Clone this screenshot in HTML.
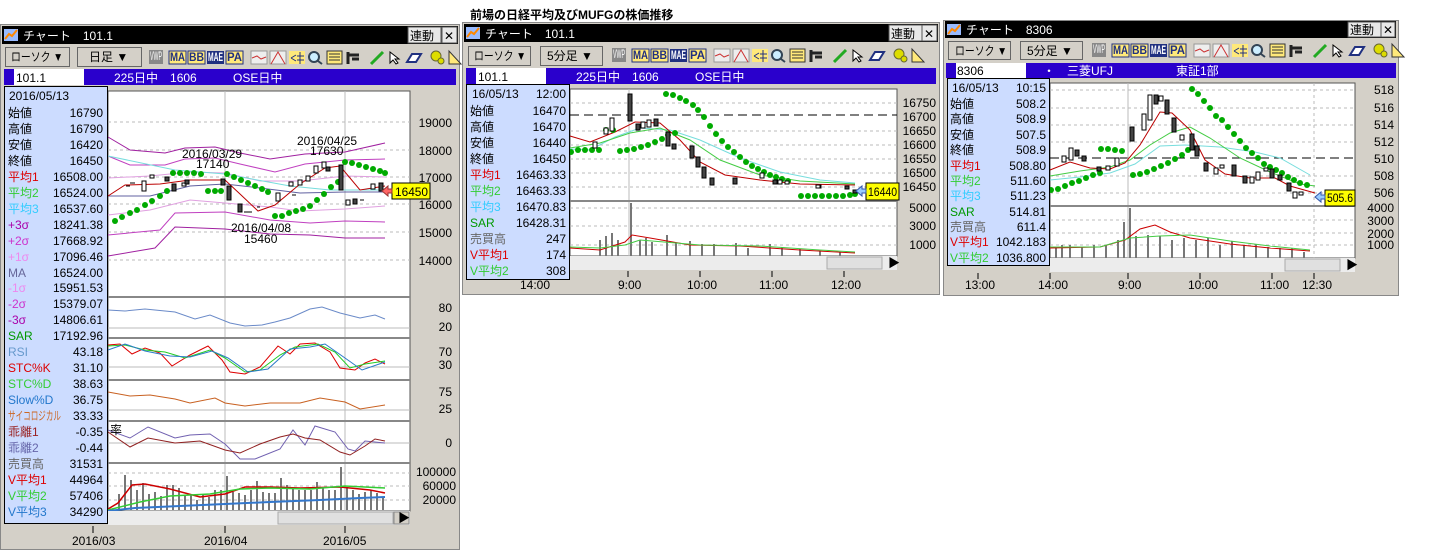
<!DOCTYPE html>
<html><head><meta charset="utf-8"><style>
html,body{margin:0;padding:0;background:#fff;width:1455px;height:556px;overflow:hidden}
svg{display:block}
text{font-family:"Liberation Sans","Noto Sans CJK JP",sans-serif;font-size:12px}
.ax{font-size:11.5px;text-anchor:end;fill:#000}
.v{text-anchor:end}
</style></head><body>
<svg width="1455" height="556" viewBox="0 0 1455 556" xmlns="http://www.w3.org/2000/svg">
<defs>
<g id="tb">
 <rect x="0" y="0" width="14" height="14" fill="#888"/><text x="1" y="10" font-size="6" fill="#fff" textLength="12" lengthAdjust="spacingAndGlyphs">VWP</text>
 <rect x="20" y="1" width="17" height="13" fill="#ffe97a" stroke="#203080"/><text x="21" y="11" font-size="8" font-weight="bold" fill="#203080" textLength="15" lengthAdjust="spacingAndGlyphs">MA</text>
 <rect x="39" y="1" width="17" height="13" fill="#ffe97a" stroke="#203080"/><text x="40" y="11" font-size="8" font-weight="bold" fill="#203080" textLength="15" lengthAdjust="spacingAndGlyphs">BB</text>
 <rect x="58" y="1" width="17" height="13" fill="#203080"/><text x="59" y="11" font-size="7" font-weight="bold" fill="#fff" textLength="15" lengthAdjust="spacingAndGlyphs">MAE</text>
 <rect x="77" y="1" width="17" height="13" fill="#ffe97a" stroke="#203080"/><text x="78" y="11" font-size="8" font-weight="bold" fill="#203080" textLength="15" lengthAdjust="spacingAndGlyphs">PA</text>
 <rect x="102" y="1" width="16" height="13" fill="#eee" stroke="#999"/><path d="M103 8 L108 6 L112 9 L117 7" stroke="#c33" fill="none"/>
 <rect x="121" y="1" width="16" height="13" fill="#eee" stroke="#999"/><path d="M122 14 L129 2 L136 14" stroke="#c33" fill="none"/>
 <rect x="140" y="1" width="16" height="13" fill="#ffe97a"/><path d="M142 8 L147 5 M142 8 L147 11 M151 2 V14 M148 6 H155 M148 10 H155" stroke="#203080" fill="none"/>
 <circle cx="165" cy="7" r="5" fill="#cef" stroke="#345" stroke-width="2"/><path d="M169 11 L173 14" stroke="#345" stroke-width="2"/>
 <rect x="178" y="1" width="15" height="13" fill="#ffe97a" stroke="#333"/><path d="M180 4H191M180 7H191M180 10H191" stroke="#333"/>
 <path d="M199 2V14M199 5H210M203 9H210" stroke="#222" stroke-width="3"/>
 <path d="M222 14 L234 2" stroke="#2a2" stroke-width="3"/>
 <path d="M241 2 L241 13 L244 10 L247 14 L249 13 L246 9 L250 9 Z" fill="#fff" stroke="#000"/>
 <path d="M258 12 L263 4 L272 4 L267 12 Z" fill="#fff" stroke="#203080" stroke-width="2"/>
 <circle cx="287" cy="6" r="5" fill="#dd0" stroke="#663"/><circle cx="292" cy="11" r="3" fill="#dd0" stroke="#663"/>
 <path d="M300 1 L300 14 L312 14 Z" fill="#ffe97a" stroke="#333"/>
</g>
</defs>

<text x="470" y="19" font-size="14" font-weight="bold">前場の日経平均及びMUFGの株価推移</text>

<!-- ================= WINDOW 1 ================= -->
<rect x="0.5" y="24.5" width="459" height="525" fill="#d4d0c8" stroke="#888"/>
<rect x="2" y="26" width="456" height="18" fill="#000"/>
<rect x="4" y="29" width="14" height="12" fill="#9bf"/><path d="M5 39 L9 34 L12 36 L17 30" stroke="#f80" stroke-width="2" fill="none"/>
<text x="23" y="40" fill="#fff" font-size="13">チャート　101.1</text>
<rect x="408" y="27" width="33" height="16" fill="#e8e8e8" stroke="#555"/><text x="410" y="40" font-size="13">連動</text>
<rect x="442" y="27" width="15" height="16" fill="#e8e8e8" stroke="#555"/><text x="444" y="40" font-size="13">✕</text>
<rect x="5.5" y="47.5" width="64" height="19" fill="#d4d0c8" stroke="#666"/><text x="11" y="61" font-size="11" textLength="52" lengthAdjust="spacingAndGlyphs">ローソク ▼</text>
<rect x="77.5" y="47.5" width="64" height="19" fill="#d4d0c8" stroke="#666"/><text x="89" y="61" font-size="11">日足 ▼</text>
<use href="#tb" x="149" y="50"/>
<rect x="4" y="69" width="452" height="16" fill="#2a00cc"/>
<rect x="14" y="69" width="70" height="16" fill="#fff"/><text x="16" y="82">101.1</text>
<text x="114" y="82" fill="#fff">225日中　1606</text><text x="233" y="82" fill="#fff">OSE日中</text>
<rect x="108" y="91" width="302" height="420" fill="#fff" stroke="#555"/>
<g stroke="#bbb" stroke-dasharray="3,3"><line x1="108" y1="122" x2="410" y2="122"/><line x1="108" y1="150" x2="410" y2="150"/><line x1="108" y1="177" x2="410" y2="177"/><line x1="108" y1="204" x2="410" y2="204"/><line x1="108" y1="232" x2="410" y2="232"/><line x1="108" y1="260" x2="410" y2="260"/>
<line x1="108" y1="486" x2="410" y2="486"/><line x1="108" y1="473" x2="410" y2="473"/><line x1="108" y1="500" x2="410" y2="500"/></g>
<g stroke="#bbb"><line x1="225" y1="91" x2="225" y2="511"/><line x1="345" y1="91" x2="345" y2="511"/><line x1="108" y1="328" x2="410" y2="328"/><line x1="108" y1="367" x2="410" y2="367"/><line x1="108" y1="410" x2="410" y2="410"/><line x1="108" y1="443" x2="410" y2="443"/></g>
<g stroke="#888" stroke-width="2"><line x1="108" y1="297" x2="410" y2="297"/><line x1="108" y1="338" x2="410" y2="338"/><line x1="108" y1="380" x2="410" y2="380"/><line x1="108" y1="421" x2="410" y2="421"/><line x1="108" y1="463" x2="410" y2="463"/></g>
<g fill="none" stroke-width="1">
<polyline stroke="#a020a0" points="108,137 130,150 165,153 185,148 215,147 240,153 270,159 305,154 345,152 385,143"/>
<polyline stroke="#c040c0" points="108,156 130,165 165,165 185,159 215,158 240,164 275,172 305,164 345,160 385,159"/>
<polyline stroke="#e0a0e0" points="108,178 150,176 190,172 225,173 260,181 300,181 345,176 385,177"/>
<polyline stroke="#6060a0" points="108,196 150,196 190,186 225,184 260,188 300,193 345,192 385,192"/>
<polyline stroke="#e0a0e0" points="108,215 150,210 190,200 225,203 270,207 300,211 345,209 385,206"/>
<polyline stroke="#c040c0" points="108,235 160,230 175,213 225,212 270,220 310,223 345,221 385,222"/>
<polyline stroke="#a020a0" points="108,256 155,248 175,227 225,229 270,234 310,235 345,238 385,238"/>
<polyline stroke="#7dd" points="108,156 175,170 225,174 290,186 330,190 385,190"/>
<polyline stroke="#b00" points="108,196 125,185 160,184 190,180 225,180 240,194 258,211 275,205 300,184 325,168 340,166 360,190 385,186"/>
</g>
<g fill="#0a0"><circle cx="115" cy="221" r="3"/><circle cx="122" cy="217" r="3"/><circle cx="130" cy="213" r="3"/><circle cx="137" cy="210" r="3"/><circle cx="145" cy="205" r="3"/><circle cx="152" cy="201" r="3"/><circle cx="160" cy="196" r="3"/><circle cx="167" cy="191" r="3"/><circle cx="173" cy="173" r="3"/><circle cx="180" cy="173" r="3"/><circle cx="187" cy="173" r="3"/><circle cx="194" cy="173" r="3"/><circle cx="201" cy="174" r="3"/><circle cx="208" cy="191" r="3"/><circle cx="215" cy="191" r="3"/><circle cx="221" cy="191" r="3"/><circle cx="227" cy="174" r="3"/><circle cx="234" cy="177" r="3"/><circle cx="241" cy="180" r="3"/><circle cx="248" cy="183" r="3"/><circle cx="255" cy="186" r="3"/><circle cx="262" cy="189" r="3"/><circle cx="268" cy="192" r="3"/><circle cx="275" cy="216" r="3"/><circle cx="282" cy="216" r="3"/><circle cx="289" cy="213" r="3"/><circle cx="296" cy="211" r="3"/><circle cx="303" cy="209" r="3"/><circle cx="310" cy="206" r="3"/><circle cx="317" cy="200" r="3"/><circle cx="324" cy="194" r="3"/><circle cx="331" cy="187" r="3"/><circle cx="338" cy="182" r="3"/><circle cx="345" cy="162" r="3"/><circle cx="352" cy="163" r="3"/><circle cx="359" cy="165" r="3"/><circle cx="366" cy="167" r="3"/><circle cx="373" cy="169" r="3"/><circle cx="380" cy="171" r="3"/><circle cx="385" cy="173" r="3"/></g>
<g stroke="#000" fill="#fff"><rect x="142" y="181" width="4" height="10"/><rect x="150" y="175" width="4" height="3"/><rect x="182" y="183" width="4" height="3"/><rect x="276" y="193" width="4" height="8"/><rect x="298" y="180" width="4" height="5"/><rect x="314" y="166" width="4" height="7"/><rect x="322" y="162" width="4" height="6"/><rect x="346" y="200" width="4" height="5"/><rect x="371" y="184" width="4" height="5"/><rect x="306" y="176" width="4" height="5"/><rect x="289" y="182" width="4" height="4"/></g>
<g fill="#444" stroke="#000"><rect x="172" y="184" width="4" height="7"/><rect x="221" y="179" width="4" height="6"/><rect x="227" y="186" width="4" height="14"/><rect x="238" y="204" width="4" height="8"/><rect x="339" y="165" width="4" height="25"/><rect x="353" y="199" width="4" height="5"/><rect x="379" y="183" width="4" height="8"/><rect x="326" y="167" width="4" height="4"/><rect x="165" y="177" width="4" height="4"/><rect x="185" y="180" width="4" height="4"/></g>
<g stroke="#000"><line x1="130" y1="183" x2="135" y2="183"/><line x1="126" y1="186" x2="130" y2="186"/><line x1="244" y1="212" x2="252" y2="212"/><line x1="257" y1="207" x2="260" y2="207"/><line x1="292" y1="195" x2="296" y2="195"/><line x1="360" y1="200" x2="364" y2="200"/></g>
<text x="182" y="158" font-size="11">2016/03/29</text><text x="196" y="168" font-size="11">17140</text>
<text x="297" y="145" font-size="11">2016/04/25</text><text x="310" y="155" font-size="11">17630</text>
<text x="231" y="232" font-size="11">2016/04/08</text><text x="244" y="243" font-size="11">15460</text>
<polyline fill="none" stroke="#6a8ac8" points="108,310 125,311 145,309 175,312 195,319 210,315 230,323 245,326 262,325 275,322 290,318 310,309 322,307 340,313 360,318 375,315 385,319"/>
<polyline fill="none" stroke="#d00" points="108,345 120,344 132,354 145,348 160,353 172,366 190,355 208,346 222,360 230,372 245,374 260,367 278,346 290,354 300,344 315,343 330,352 340,368 355,370 365,363 375,359 385,364"/>
<polyline fill="none" stroke="#2c2" points="108,346 125,345 145,350 165,352 185,358 210,350 225,358 245,372 260,370 280,355 295,347 318,344 335,352 350,368 365,364 385,361"/>
<polyline fill="none" stroke="#2a7ac8" points="108,350 125,344 145,351 170,356 190,357 212,351 228,358 248,372 268,369 290,349 310,347 325,344 345,358 362,370 385,362"/>
<polyline fill="none" stroke="#c86020" points="108,392 130,396 150,395 175,399 190,403 215,398 225,403 245,406 270,403 300,403 320,398 345,402 360,409 385,405"/>
<polyline fill="none" stroke="#7060b0" points="108,430 130,438 148,427 175,438 190,435 210,434 225,444 240,459 255,459 280,449 293,430 305,445 315,426 335,432 348,449 355,451 365,441 385,443"/>
<polyline fill="none" stroke="#902020" points="108,432 130,447 148,438 175,443 200,441 225,450 240,453 260,444 280,437 293,434 305,438 320,440 340,452 350,455 365,446 375,439 385,441"/>
<text x="110" y="434" font-size="11">率</text>
<g stroke="#777" stroke-width="2"><line x1="119" y1="510" x2="119" y2="494"/><line x1="125" y1="510" x2="125" y2="475"/><line x1="131" y1="510" x2="131" y2="480"/><line x1="137" y1="510" x2="137" y2="490"/><line x1="143" y1="510" x2="143" y2="483"/><line x1="149" y1="510" x2="149" y2="494"/><line x1="155" y1="510" x2="155" y2="492"/><line x1="161" y1="510" x2="161" y2="496"/><line x1="167" y1="510" x2="167" y2="485"/><line x1="173" y1="510" x2="173" y2="485"/><line x1="179" y1="510" x2="179" y2="488"/><line x1="185" y1="510" x2="185" y2="496"/><line x1="191" y1="510" x2="191" y2="495"/><line x1="197" y1="510" x2="197" y2="500"/><line x1="203" y1="510" x2="203" y2="494"/><line x1="209" y1="510" x2="209" y2="497"/><line x1="215" y1="510" x2="215" y2="490"/><line x1="221" y1="510" x2="221" y2="490"/><line x1="227" y1="510" x2="227" y2="476"/><line x1="233" y1="510" x2="233" y2="492"/><line x1="239" y1="510" x2="239" y2="493"/><line x1="245" y1="510" x2="245" y2="495"/><line x1="251" y1="510" x2="251" y2="490"/><line x1="257" y1="510" x2="257" y2="481"/><line x1="263" y1="510" x2="263" y2="492"/><line x1="269" y1="510" x2="269" y2="493"/><line x1="275" y1="510" x2="275" y2="493"/><line x1="281" y1="510" x2="281" y2="478"/><line x1="287" y1="510" x2="287" y2="485"/><line x1="293" y1="510" x2="293" y2="488"/><line x1="299" y1="510" x2="299" y2="490"/><line x1="305" y1="510" x2="305" y2="490"/><line x1="311" y1="510" x2="311" y2="490"/><line x1="317" y1="510" x2="317" y2="482"/><line x1="323" y1="510" x2="323" y2="488"/><line x1="329" y1="510" x2="329" y2="490"/><line x1="335" y1="510" x2="335" y2="490"/><line x1="341" y1="510" x2="341" y2="467"/><line x1="347" y1="510" x2="347" y2="487"/><line x1="353" y1="510" x2="353" y2="490"/><line x1="359" y1="510" x2="359" y2="494"/><line x1="365" y1="510" x2="365" y2="492"/><line x1="371" y1="510" x2="371" y2="490"/><line x1="377" y1="510" x2="377" y2="493"/><line x1="383" y1="510" x2="383" y2="497"/></g>
<polyline fill="none" stroke="#c00" stroke-width="1.5" points="108,509 118,503 132,485 145,484 170,489 200,497 225,494 245,487 270,487 300,488 340,487 370,490 385,493"/>
<polyline fill="none" stroke="#3c3" stroke-width="1.5" points="108,510 140,502 170,496 210,494 240,489 270,488 310,489 345,486 385,488"/>
<polyline fill="none" stroke="#37c" stroke-width="2" points="108,511 135,508 180,506 225,504 270,502 320,500 360,498 385,497"/>
<rect x="108" y="511" width="302" height="14" fill="#ececec"/><rect x="278" y="512" width="115" height="12" fill="#e0e0e0" stroke="#aaa"/><rect x="394" y="512" width="15" height="12" fill="#d4d0c8" stroke="#888"/><text x="398" y="522" font-size="8">▶</text>
<g class="ax"><text x="452" y="127">19000</text><text x="452" y="155">18000</text><text x="452" y="182">17000</text><text x="452" y="209">16000</text><text x="452" y="237">15000</text><text x="452" y="265">14000</text>
<text x="452" y="312">80</text><text x="452" y="331">20</text><text x="452" y="356">70</text><text x="452" y="369">30</text><text x="452" y="396">75</text><text x="452" y="413">25</text><text x="452" y="447">0</text><text x="456" y="476">100000</text><text x="456" y="490">60000</text><text x="456" y="504">20000</text></g>
<rect x="392" y="183" width="38" height="16" fill="#ff0" stroke="#000"/><text x="395" y="196" textLength="33" lengthAdjust="spacingAndGlyphs">16450</text>
<path d="M382 191 L388 186 V189 H392 V193 H388 V196 Z" fill="#f66" stroke="#933"/>
<g stroke="#000"><line x1="93" y1="526" x2="93" y2="533"/><line x1="225" y1="526" x2="225" y2="533"/><line x1="345" y1="526" x2="345" y2="533"/></g>
<text x="72" y="545" font-size="11.5">2016/03</text><text x="204" y="545" font-size="11.5">2016/04</text><text x="323" y="545" font-size="11.5">2016/05</text>
<rect x="4.5" y="86.5" width="103" height="437" fill="#ccdcff" stroke="#000"/>
<g font-size="12">
<text x="9" y="100">2016/05/13</text>
<text x="8" y="117">始値</text><text class="v" x="103" y="117">16790</text>
<text x="8" y="133">高値</text><text class="v" x="103" y="133">16790</text>
<text x="8" y="149">安値</text><text class="v" x="103" y="149">16420</text>
<text x="8" y="165">終値</text><text class="v" x="103" y="165">16450</text>
<text x="8" y="181" fill="#d00">平均1</text><text class="v" x="103" y="181">16508.00</text>
<text x="8" y="197" fill="#3c3">平均2</text><text class="v" x="103" y="197">16524.00</text>
<text x="8" y="213" fill="#3cf">平均3</text><text class="v" x="103" y="213">16537.60</text>
<text x="8" y="229" fill="#a0a">+3σ</text><text class="v" x="103" y="229">18241.38</text>
<text x="8" y="245" fill="#c3c">+2σ</text><text class="v" x="103" y="245">17668.92</text>
<text x="8" y="261" fill="#e8e">+1σ</text><text class="v" x="103" y="261">17096.46</text>
<text x="8" y="277" fill="#669">MA</text><text class="v" x="103" y="277">16524.00</text>
<text x="8" y="292" fill="#e8e">-1σ</text><text class="v" x="103" y="292">15951.53</text>
<text x="8" y="308" fill="#c3c">-2σ</text><text class="v" x="103" y="308">15379.07</text>
<text x="8" y="324" fill="#a0a">-3σ</text><text class="v" x="103" y="324">14806.61</text>
<text x="8" y="340" fill="#090">SAR</text><text class="v" x="103" y="340">17192.96</text>
<text x="8" y="356" fill="#69c">RSI</text><text class="v" x="103" y="356">43.18</text>
<text x="8" y="372" fill="#d00">STC%K</text><text class="v" x="103" y="372">31.10</text>
<text x="8" y="388" fill="#3c3">STC%D</text><text class="v" x="103" y="388">38.63</text>
<text x="8" y="404" fill="#27c">Slow%D</text><text class="v" x="103" y="404">36.75</text>
<text x="8" y="420" fill="#c62" textLength="53" lengthAdjust="spacingAndGlyphs">サイコロジカル</text><text class="v" x="103" y="420">33.33</text>
<text x="8" y="436" fill="#922">乖離1</text><text class="v" x="103" y="436">-0.35</text>
<text x="8" y="452" fill="#66a">乖離2</text><text class="v" x="103" y="452">-0.44</text>
<text x="8" y="468" fill="#666">売買高</text><text class="v" x="103" y="468">31531</text>
<text x="8" y="484" fill="#d00">V平均1</text><text class="v" x="103" y="484">44964</text>
<text x="8" y="500" fill="#3c3">V平均2</text><text class="v" x="103" y="500">57406</text>
<text x="8" y="516" fill="#27c">V平均3</text><text class="v" x="103" y="516">34290</text>
</g>

<!-- ================= WINDOW 2 ================= -->
<rect x="462.5" y="22.5" width="477" height="272" fill="#d4d0c8" stroke="#888"/>
<rect x="464" y="24" width="474" height="18" fill="#000"/>
<rect x="466" y="27" width="14" height="12" fill="#9bf"/><path d="M467 37 L471 32 L474 34 L479 28" stroke="#f80" stroke-width="2" fill="none"/>
<text x="485" y="38" fill="#fff" font-size="13">チャート　101.1</text>
<rect x="889" y="25" width="33" height="16" fill="#e8e8e8" stroke="#555"/><text x="891" y="38" font-size="13">連動</text>
<rect x="922" y="25" width="15" height="16" fill="#e8e8e8" stroke="#555"/><text x="924" y="38" font-size="13">✕</text>
<rect x="468.5" y="46.5" width="62" height="19" fill="#d4d0c8" stroke="#666"/><text x="474" y="60" font-size="11" textLength="52" lengthAdjust="spacingAndGlyphs">ローソク ▼</text>
<rect x="540.5" y="46.5" width="62" height="19" fill="#d4d0c8" stroke="#666"/><text x="547" y="60" font-size="11">5分足 ▼</text>
<use href="#tb" x="612" y="48"/>
<rect x="466" y="68" width="470" height="16" fill="#2a00cc"/>
<rect x="476" y="68" width="70" height="16" fill="#fff"/><text x="478" y="81">101.1</text>
<text x="576" y="81" fill="#fff">225日中　1606</text><text x="695" y="81" fill="#fff">OSE日中</text>
<rect x="570" y="89" width="327" height="167" fill="#fff" stroke="#555"/>
<g stroke="#bbb" stroke-dasharray="3,3"><line x1="570" y1="103" x2="897" y2="103"/><line x1="570" y1="131" x2="897" y2="131"/><line x1="570" y1="145" x2="897" y2="145"/><line x1="570" y1="159" x2="897" y2="159"/><line x1="570" y1="173" x2="897" y2="173"/><line x1="570" y1="187" x2="897" y2="187"/><line x1="570" y1="208" x2="897" y2="208"/><line x1="570" y1="226" x2="897" y2="226"/><line x1="570" y1="245" x2="897" y2="245"/></g>
<line x1="570" y1="115" x2="897" y2="115" stroke="#000" stroke-dasharray="9,5"/>
<line x1="629" y1="89" x2="629" y2="256" stroke="#bbb"/>
<line x1="570" y1="201" x2="897" y2="201" stroke="#888" stroke-width="2"/>
<polyline fill="none" stroke="#7dd" points="570,149 590,150 615,137 640,128 670,130 700,140 740,158 780,172 820,180 855,183"/>
<polyline fill="none" stroke="#4c4" points="570,148 600,143 630,133 660,128 690,140 720,160 760,175 800,181 855,184"/>
<polyline fill="none" stroke="#b00" points="570,136 590,142 615,132 635,122 660,123 680,140 700,162 725,175 760,180 800,184 855,185"/>
<g fill="#0a0"><circle cx="571" cy="152" r="3"/><circle cx="578" cy="150" r="3"/><circle cx="585" cy="150" r="3"/><circle cx="592" cy="150" r="3"/><circle cx="599" cy="150" r="3"/><circle cx="606" cy="130" r="3"/><circle cx="613" cy="130" r="3"/><circle cx="620" cy="151" r="3"/><circle cx="627" cy="150" r="3"/><circle cx="634" cy="149" r="3"/><circle cx="641" cy="147" r="3"/><circle cx="648" cy="145" r="3"/><circle cx="655" cy="142" r="3"/><circle cx="662" cy="139" r="3"/><circle cx="668" cy="135" r="3"/><circle cx="675" cy="133" r="3"/><circle cx="666" cy="94" r="3"/><circle cx="673" cy="95" r="3"/><circle cx="680" cy="98" r="3"/><circle cx="686" cy="101" r="3"/><circle cx="693" cy="105" r="3"/><circle cx="698" cy="110" r="3"/><circle cx="704" cy="117" r="3"/><circle cx="710" cy="126" r="3"/><circle cx="716" cy="134" r="3"/><circle cx="722" cy="141" r="3"/><circle cx="728" cy="147" r="3"/><circle cx="734" cy="152" r="3"/><circle cx="740" cy="157" r="3"/><circle cx="746" cy="162" r="3"/><circle cx="752" cy="166" r="3"/><circle cx="758" cy="169" r="3"/><circle cx="764" cy="172" r="3"/><circle cx="770" cy="175" r="3"/><circle cx="776" cy="177" r="3"/><circle cx="782" cy="179" r="3"/><circle cx="788" cy="181" r="3"/><circle cx="801" cy="196" r="3"/><circle cx="808" cy="196" r="3"/><circle cx="815" cy="196" r="3"/><circle cx="822" cy="196" r="3"/><circle cx="829" cy="196" r="3"/><circle cx="836" cy="196" r="3"/><circle cx="843" cy="196" r="3"/><circle cx="850" cy="195" r="3"/><circle cx="855" cy="194" r="3"/></g>
<g fill="#444" stroke="#000"><rect x="628" y="94" width="4" height="27"/><rect x="636" y="124" width="4" height="6"/><rect x="654" y="119" width="4" height="7"/><rect x="666" y="132" width="4" height="14"/><rect x="672" y="144" width="4" height="5"/><rect x="690" y="146" width="4" height="12"/><rect x="696" y="157" width="4" height="10"/><rect x="702" y="167" width="4" height="11"/><rect x="710" y="178" width="4" height="7"/><rect x="733" y="178" width="4" height="6"/><rect x="773" y="180" width="4" height="4"/><rect x="817" y="185" width="4" height="3"/><rect x="845" y="186" width="4" height="3"/><rect x="853" y="190" width="4" height="3"/></g>
<g fill="#fff" stroke="#000"><rect x="610" y="118" width="4" height="13"/><rect x="604" y="128" width="4" height="6"/><rect x="593" y="142" width="4" height="6"/><rect x="641" y="122" width="4" height="6"/><rect x="647" y="120" width="4" height="7"/><rect x="760" y="173" width="4" height="5"/><rect x="778" y="180" width="4" height="4"/><rect x="785" y="181" width="4" height="3"/><rect x="816" y="185" width="4" height="3"/></g>
<g stroke="#777" stroke-width="2"><line x1="600" y1="256" x2="600" y2="240"/><line x1="606" y1="256" x2="606" y2="236"/><line x1="612" y1="256" x2="612" y2="233"/><line x1="618" y1="256" x2="618" y2="240"/><line x1="631" y1="256" x2="631" y2="203"/><line x1="640" y1="256" x2="640" y2="240"/><line x1="646" y1="256" x2="646" y2="238"/><line x1="652" y1="256" x2="652" y2="242"/><line x1="667" y1="256" x2="667" y2="235"/><line x1="676" y1="256" x2="676" y2="243"/><line x1="690" y1="256" x2="690" y2="241"/><line x1="702" y1="256" x2="702" y2="244"/><line x1="714" y1="256" x2="714" y2="244"/><line x1="736" y1="256" x2="736" y2="243"/><line x1="748" y1="256" x2="748" y2="248"/><line x1="770" y1="256" x2="770" y2="244"/><line x1="782" y1="256" x2="782" y2="247"/><line x1="800" y1="256" x2="800" y2="249"/><line x1="820" y1="256" x2="820" y2="251"/><line x1="840" y1="256" x2="840" y2="252"/></g>
<polyline fill="none" stroke="#c00" points="570,248 600,250 625,242 632,235 650,238 690,245 740,246 800,250 855,253"/>
<polyline fill="none" stroke="#4c4" points="570,247 600,248 625,245 640,240 700,245 760,246 820,250 855,252"/>
<rect x="570" y="256" width="327" height="14" fill="#ececec"/><rect x="827" y="257" width="55" height="12" fill="#e0e0e0" stroke="#aaa"/><text x="888" y="267" font-size="8">▶</text>
<rect x="866" y="183" width="33" height="17" fill="#ff0" stroke="#000"/><text x="868" y="196" textLength="29" lengthAdjust="spacingAndGlyphs">16440</text>
<path d="M856 191 L862 186 V189 H866 V193 H862 V196 Z" fill="#9cf" stroke="#35a"/>
<g class="ax"><text x="936" y="107">16750</text><text x="936" y="121">16700</text><text x="936" y="135">16650</text><text x="936" y="149">16600</text><text x="936" y="163">16550</text><text x="936" y="177">16500</text><text x="936" y="191">16450</text><text x="936" y="212">5000</text><text x="936" y="230">3000</text><text x="936" y="249">1000</text></g>
<g stroke="#000"><line x1="628" y1="271" x2="628" y2="277"/><line x1="700" y1="271" x2="700" y2="277"/><line x1="772" y1="271" x2="772" y2="277"/><line x1="844" y1="271" x2="844" y2="277"/></g>
<text x="520" y="289" font-size="11.5">14:00</text><text x="618" y="289" font-size="11.5">9:00</text><text x="687" y="289" font-size="11.5">10:00</text><text x="759" y="289" font-size="11.5">11:00</text><text x="831" y="289" font-size="11.5">12:00</text>
<rect x="466.5" y="84.5" width="103" height="195" fill="#ccdcff" stroke="#000"/>
<text x="472" y="98">16/05/13</text><text class="v" x="566" y="98">12:00</text>
<text x="470" y="115">始値</text><text class="v" x="566" y="115">16470</text>
<text x="470" y="131">高値</text><text class="v" x="566" y="131">16470</text>
<text x="470" y="147">安値</text><text class="v" x="566" y="147">16440</text>
<text x="470" y="163">終値</text><text class="v" x="566" y="163">16450</text>
<text x="470" y="179" fill="#d00">平均1</text><text class="v" x="566" y="179">16463.33</text>
<text x="470" y="195" fill="#3c3">平均2</text><text class="v" x="566" y="195">16463.33</text>
<text x="470" y="211" fill="#3cf">平均3</text><text class="v" x="566" y="211">16470.83</text>
<text x="470" y="227" fill="#090">SAR</text><text class="v" x="566" y="227">16428.31</text>
<text x="470" y="243" fill="#666">売買高</text><text class="v" x="566" y="243">247</text>
<text x="470" y="259" fill="#d00">V平均1</text><text class="v" x="566" y="259">174</text>
<text x="470" y="275" fill="#3c3">V平均2</text><text class="v" x="566" y="275">308</text>

<!-- ================= WINDOW 3 ================= -->
<rect x="943.5" y="20.5" width="455" height="275" fill="#d4d0c8" stroke="#888"/>
<rect x="945" y="21" width="451" height="17" fill="#000"/>
<rect x="947" y="24" width="14" height="11" fill="#9bf"/><path d="M948 34 L952 29 L955 31 L960 25" stroke="#f80" stroke-width="2" fill="none"/>
<text x="966" y="34" fill="#fff" font-size="12">チャート　8306</text>
<rect x="1348" y="22" width="33" height="15" fill="#e8e8e8" stroke="#555"/><text x="1350" y="34" font-size="12">連動</text>
<rect x="1381" y="22" width="14" height="15" fill="#e8e8e8" stroke="#555"/><text x="1383" y="34" font-size="12">✕</text>
<rect x="948.5" y="41.5" width="62" height="18" fill="#d4d0c8" stroke="#666"/><text x="955" y="55" font-size="11" textLength="52" lengthAdjust="spacingAndGlyphs">ローソク ▼</text>
<rect x="1020.5" y="41.5" width="62" height="18" fill="#d4d0c8" stroke="#666"/><text x="1027" y="55" font-size="11">5分足 ▼</text>
<use href="#tb" x="1092" y="43"/>
<rect x="946" y="63" width="450" height="15" fill="#2a00cc"/>
<rect x="956" y="63" width="70" height="15" fill="#fff"/><text x="957" y="75">8306</text>
<text x="1043" y="75" fill="#fff">・　三菱UFJ</text><text x="1176" y="75" fill="#fff">東証1部</text>
<rect x="1050" y="83" width="305" height="175" fill="#fff" stroke="#555"/>
<g stroke="#bbb" stroke-dasharray="3,3"><line x1="1050" y1="90" x2="1355" y2="90"/><line x1="1050" y1="108" x2="1355" y2="108"/><line x1="1050" y1="125" x2="1355" y2="125"/><line x1="1050" y1="142" x2="1355" y2="142"/><line x1="1050" y1="176" x2="1355" y2="176"/><line x1="1050" y1="193" x2="1355" y2="193"/><line x1="1050" y1="220" x2="1355" y2="220"/><line x1="1050" y1="233" x2="1355" y2="233"/><line x1="1050" y1="245" x2="1355" y2="245"/><line x1="1314" y1="83" x2="1314" y2="258"/></g>
<line x1="1050" y1="158" x2="1355" y2="158" stroke="#000" stroke-dasharray="9,5"/>
<line x1="1128" y1="83" x2="1128" y2="258" stroke="#bbb"/>
<line x1="1050" y1="206" x2="1355" y2="206" stroke="#888" stroke-width="2"/>
<polyline fill="none" stroke="#7dd" points="1050,180 1080,177 1110,173 1135,164 1160,146 1185,145 1220,147 1255,152 1280,158 1310,175"/>
<polyline fill="none" stroke="#4c4" points="1050,176 1080,171 1110,167 1130,160 1150,145 1170,133 1190,127 1210,138 1240,158 1270,172 1300,184 1315,186"/>
<polyline fill="none" stroke="#b00" points="1050,170 1070,162 1090,168 1110,169 1125,163 1140,145 1160,112 1172,113 1190,130 1205,160 1225,174 1250,178 1275,178 1290,186 1315,193"/>
<g fill="#0a0"><circle cx="1051" cy="190" r="3"/><circle cx="1058" cy="189" r="3"/><circle cx="1065" cy="186" r="3"/><circle cx="1072" cy="183" r="3"/><circle cx="1079" cy="181" r="3"/><circle cx="1086" cy="178" r="3"/><circle cx="1093" cy="175" r="3"/><circle cx="1100" cy="173" r="3"/><circle cx="1101" cy="149" r="3"/><circle cx="1108" cy="149" r="3"/><circle cx="1115" cy="150" r="3"/><circle cx="1122" cy="151" r="3"/><circle cx="1133" cy="175" r="3"/><circle cx="1140" cy="174" r="3"/><circle cx="1147" cy="172" r="3"/><circle cx="1154" cy="169" r="3"/><circle cx="1161" cy="166" r="3"/><circle cx="1168" cy="163" r="3"/><circle cx="1175" cy="159" r="3"/><circle cx="1182" cy="155" r="3"/><circle cx="1188" cy="150" r="3"/><circle cx="1192" cy="89" r="3"/><circle cx="1198" cy="94" r="3"/><circle cx="1204" cy="101" r="3"/><circle cx="1210" cy="108" r="3"/><circle cx="1216" cy="116" r="3"/><circle cx="1222" cy="120" r="3"/><circle cx="1228" cy="127" r="3"/><circle cx="1234" cy="134" r="3"/><circle cx="1240" cy="141" r="3"/><circle cx="1246" cy="148" r="3"/><circle cx="1252" cy="153" r="3"/><circle cx="1258" cy="158" r="3"/><circle cx="1264" cy="164" r="3"/><circle cx="1270" cy="167" r="3"/><circle cx="1276" cy="170" r="3"/><circle cx="1282" cy="173" r="3"/><circle cx="1288" cy="177" r="3"/><circle cx="1294" cy="180" r="3"/><circle cx="1300" cy="183" r="3"/><circle cx="1307" cy="185" r="3"/></g>
<g fill="#444" stroke="#000"><rect x="1130" y="127" width="4" height="14"/><rect x="1154" y="95" width="4" height="9"/><rect x="1165" y="100" width="4" height="14"/><rect x="1172" y="118" width="4" height="14"/><rect x="1190" y="134" width="4" height="16"/><rect x="1195" y="146" width="4" height="10"/><rect x="1204" y="163" width="4" height="8"/><rect x="1232" y="165" width="4" height="11"/><rect x="1243" y="176" width="4" height="7"/><rect x="1270" y="169" width="4" height="9"/><rect x="1278" y="175" width="4" height="5"/><rect x="1287" y="183" width="4" height="8"/><rect x="1075" y="150" width="4" height="6"/><rect x="1082" y="156" width="4" height="5"/><rect x="1097" y="167" width="4" height="4"/></g>
<g fill="#fff" stroke="#000"><rect x="1069" y="148" width="4" height="12"/><rect x="1062" y="156" width="4" height="6"/><rect x="1142" y="114" width="4" height="16"/><rect x="1148" y="95" width="4" height="25"/><rect x="1159" y="96" width="4" height="5"/><rect x="1180" y="135" width="4" height="5"/><rect x="1214" y="168" width="4" height="6"/><rect x="1220" y="165" width="4" height="3"/><rect x="1250" y="177" width="4" height="6"/><rect x="1256" y="172" width="4" height="8"/><rect x="1264" y="168" width="4" height="3"/><rect x="1293" y="192" width="4" height="6"/><rect x="1299" y="192" width="4" height="3"/><rect x="1115" y="158" width="4" height="8"/><rect x="1106" y="166" width="4" height="4"/></g>
<g stroke="#777" stroke-width="2"><line x1="1056" y1="258" x2="1056" y2="247"/><line x1="1062" y1="258" x2="1062" y2="245"/><line x1="1070" y1="258" x2="1070" y2="245"/><line x1="1082" y1="258" x2="1082" y2="247"/><line x1="1094" y1="258" x2="1094" y2="245"/><line x1="1106" y1="258" x2="1106" y2="245"/><line x1="1118" y1="258" x2="1118" y2="240"/><line x1="1124" y1="258" x2="1124" y2="222"/><line x1="1130" y1="258" x2="1130" y2="208"/><line x1="1136" y1="258" x2="1136" y2="236"/><line x1="1148" y1="258" x2="1148" y2="235"/><line x1="1160" y1="258" x2="1160" y2="236"/><line x1="1172" y1="258" x2="1172" y2="240"/><line x1="1184" y1="258" x2="1184" y2="238"/><line x1="1196" y1="258" x2="1196" y2="240"/><line x1="1208" y1="258" x2="1208" y2="238"/><line x1="1220" y1="258" x2="1220" y2="245"/><line x1="1232" y1="258" x2="1232" y2="241"/><line x1="1244" y1="258" x2="1244" y2="245"/><line x1="1256" y1="258" x2="1256" y2="244"/><line x1="1268" y1="258" x2="1268" y2="247"/><line x1="1280" y1="258" x2="1280" y2="248"/><line x1="1292" y1="258" x2="1292" y2="248"/><line x1="1304" y1="258" x2="1304" y2="252"/></g>
<polyline fill="none" stroke="#c00" points="1050,248 1100,247 1125,240 1140,229 1155,225 1170,232 1190,238 1230,244 1270,248 1310,251"/>
<polyline fill="none" stroke="#4c4" points="1050,247 1100,247 1130,238 1160,236 1190,235 1230,241 1270,246 1310,250"/>
<rect x="1050" y="258" width="305" height="14" fill="#ececec"/><rect x="1285" y="259" width="55" height="12" fill="#e0e0e0" stroke="#aaa"/><text x="1346" y="269" font-size="8">▶</text>
<rect x="1325" y="190" width="30" height="16" fill="#ff0" stroke="#000"/><text x="1327" y="202" textLength="26" lengthAdjust="spacingAndGlyphs">505.6</text>
<path d="M1315 197 L1321 192 V195 H1325 V199 H1321 V202 Z" fill="#9cf" stroke="#35a"/>
<g class="ax"><text x="1394" y="94">518</text><text x="1394" y="112">516</text><text x="1394" y="129">514</text><text x="1394" y="146">512</text><text x="1394" y="163">510</text><text x="1394" y="180">508</text><text x="1394" y="197">506</text><text x="1394" y="212">4000</text><text x="1394" y="225">3000</text><text x="1394" y="238">2000</text><text x="1394" y="249">1000</text></g>
<g stroke="#000"><line x1="978" y1="273" x2="978" y2="279"/><line x1="1050" y1="273" x2="1050" y2="279"/><line x1="1128" y1="273" x2="1128" y2="279"/><line x1="1200" y1="273" x2="1200" y2="279"/><line x1="1272" y1="273" x2="1272" y2="279"/><line x1="1314" y1="273" x2="1314" y2="279"/></g>
<text x="965" y="289" font-size="11.5">13:00</text><text x="1038" y="289" font-size="11.5">14:00</text><text x="1118" y="289" font-size="11.5">9:00</text><text x="1188" y="289" font-size="11.5">10:00</text><text x="1260" y="289" font-size="11.5">11:00</text><text x="1302" y="289" font-size="11.5">12:30</text>
<rect x="947.5" y="78.5" width="102" height="187" fill="#ccdcff" stroke="#000"/>
<text x="952" y="92">16/05/13</text><text class="v" x="1046" y="92">10:15</text>
<text x="950" y="108">始値</text><text class="v" x="1046" y="108">508.2</text>
<text x="950" y="123">高値</text><text class="v" x="1046" y="123">508.9</text>
<text x="950" y="139">安値</text><text class="v" x="1046" y="139">507.5</text>
<text x="950" y="154">終値</text><text class="v" x="1046" y="154">508.9</text>
<text x="950" y="170" fill="#d00">平均1</text><text class="v" x="1046" y="170">508.80</text>
<text x="950" y="185" fill="#3c3">平均2</text><text class="v" x="1046" y="185">511.60</text>
<text x="950" y="200" fill="#3cf">平均3</text><text class="v" x="1046" y="200">511.23</text>
<text x="950" y="216" fill="#090">SAR</text><text class="v" x="1046" y="216">514.81</text>
<text x="950" y="231" fill="#666">売買高</text><text class="v" x="1046" y="231">611.4</text>
<text x="950" y="246" fill="#d00">V平均1</text><text class="v" x="1046" y="246">1042.183</text>
<text x="950" y="262" fill="#3c3">V平均2</text><text class="v" x="1046" y="262">1036.800</text>
</svg>
</body></html>
